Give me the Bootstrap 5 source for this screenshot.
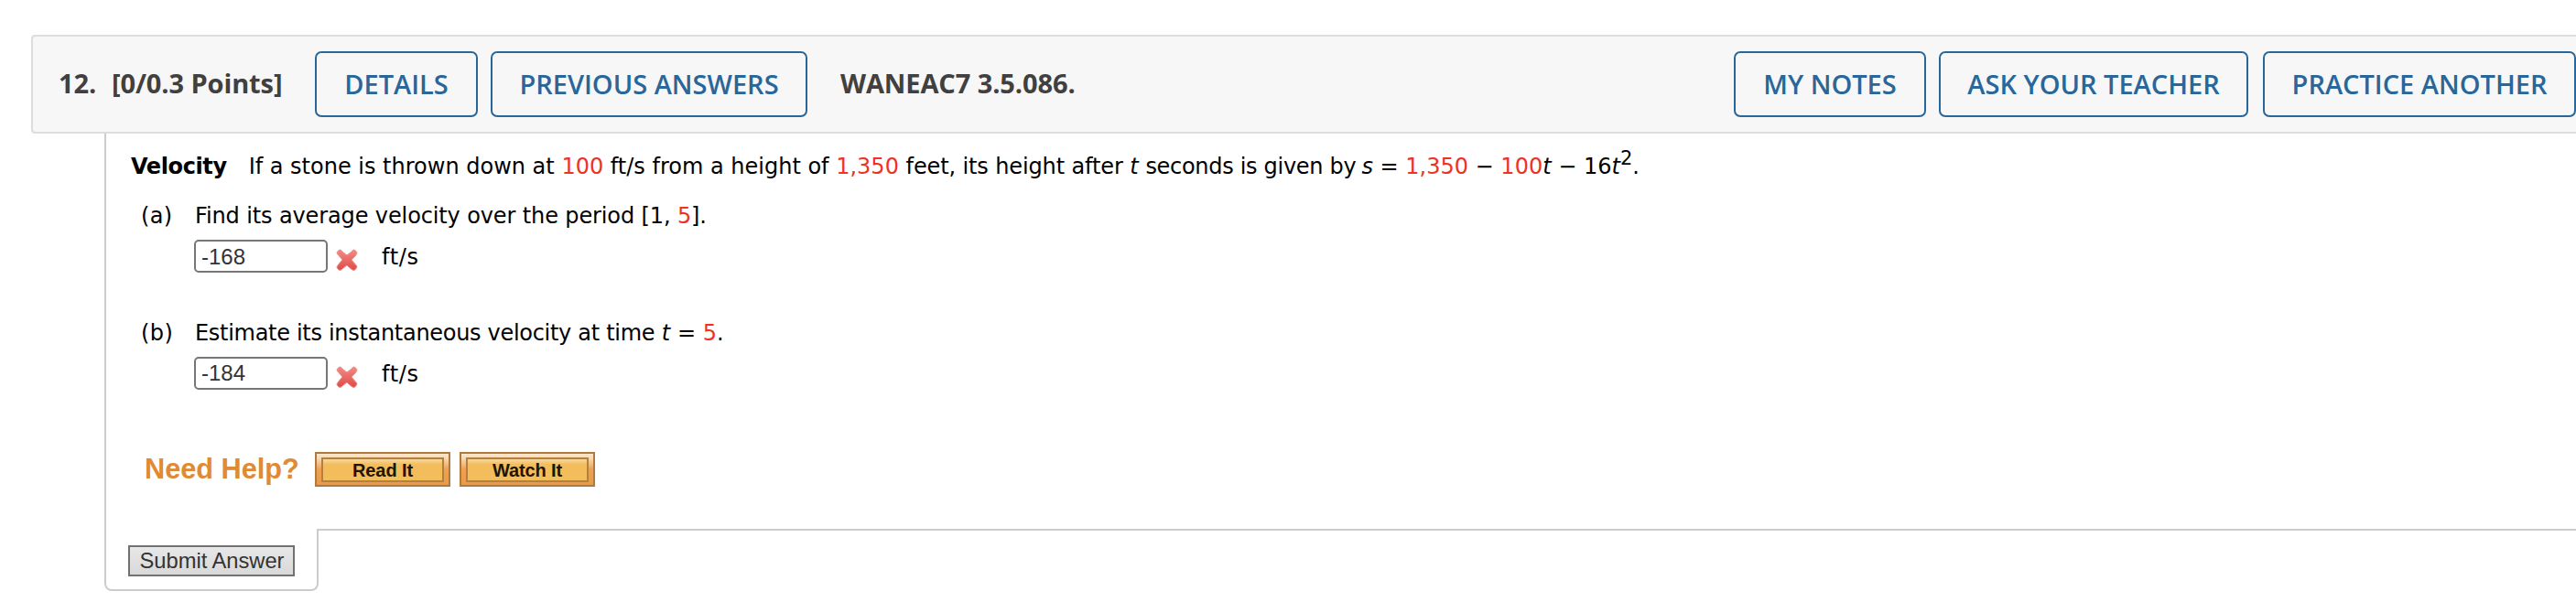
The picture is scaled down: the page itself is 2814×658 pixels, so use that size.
<!DOCTYPE html>
<html lang="en">

<head>
    <meta charset="UTF-8">
    <meta name="viewport" content="width=device-width, initial-scale=1.0">
    <title>Question 12</title>
    <link href="https://cdn.jsdelivr.net/npm/bootstrap@5.3.2/dist/css/bootstrap.min.css" rel="stylesheet">
    <style>
        body {
            background-color: #fff;
            color: #000;
            font-family: "DejaVu Sans", Verdana, sans-serif;
            font-size: 24px;
            line-height: 32px;
            white-space: nowrap;
            overflow: hidden;
        }

        .question-header {
            height: 108px;
            margin: 38px 0 0 34px;
            padding-left: 28px;
            background-color: #f7f7f7;
            border: 2px solid #ddd;
            border-right: 0;
            border-radius: 4px 0 0 4px;
            color: #404040;
            font-family: "Open Sans", sans-serif;
            font-size: 29px;
            font-weight: 700;
            letter-spacing: -.1px;
        }

        .question-number {
            width: 58px;
        }

        .question-points {
            width: 222px;
        }

        .header-label {
            padding-bottom: 2px;
        }

        .question-code {
            margin-left: 36px;
        }

        .question-header .btn {
            --bs-btn-color: #29669a;
            --bs-btn-border-color: #29669a;
            --bs-btn-hover-bg: #29669a;
            --bs-btn-hover-color: #fff;
            height: 72px;
            padding: 0 0 2px;
            border-width: 2px;
            border-radius: 7px;
            font-size: 29px;
            font-weight: 600;
            line-height: 1;
        }

        .btn-details { width: 178px; }
        .btn-previous { width: 346px; margin-left: 14px; }
        .btn-notes { width: 210px; }
        .btn-teacher { width: 338px; margin: 0 16px 0 14px; }
        .btn-practice { width: 342px; }

        .question-body {
            height: 432px;
            margin-left: 114px;
            padding: 20px 0 0 27px;
            border-left: 2px solid #ccc;
        }

        .topic {
            margin-right: 24px;
            letter-spacing: -.4px;
        }

        .rnd {
            color: #ee3224;
        }

        .tight {
            letter-spacing: -.12px;
        }

        .tighter {
            letter-spacing: -.3px;
        }

        .formula {
            margin-left: 6px;
            padding-bottom: 4px;
        }

        .formula sup {
            font-size: 21px;
            line-height: 0;
            top: -10px;
        }

        .part-list {
            padding: 18px 0 0 11px;
        }

        .part {
            height: 128px;
        }

        .part-label {
            width: 59px;
            letter-spacing: .4px;
        }

        .answer-row {
            height: 36px;
            margin: 10px 0 0 -1px;
        }

        .answer-input {
            width: 146px;
            height: 36px;
            padding: 2px 6px 0;
            border: 2px solid #767676;
            border-radius: 5px;
            color: #333;
            font: 24px "Liberation Sans", Arial, sans-serif;
        }

        .answer-input-b {
            padding: 0 6px 1px;
        }

        .wrong-mark {
            width: 24px;
            height: 24px;
            margin: 10px 26px 0 9px;
        }

        .units {
            margin-top: 3px;
            letter-spacing: .7px;
        }

        .help-row {
            height: 38px;
            margin-top: 18px;
            padding-left: 15px;
            font-family: "Liberation Sans", Arial, sans-serif;
            font-weight: 700;
        }

        .help-title {
            width: 186px;
            color: #e08a34;
            font-size: 30.7px;
        }

        .help-btn {
            width: 148px;
            height: 38px;
            margin-right: 10px;
            padding: 4px 5px;
            border: 2px solid #b07a3c;
            background: linear-gradient(#fbe6cd, #f8d9b4 15%, #eda152 50%, #ea9a48);
        }

        .help-btn span {
            display: block;
            width: 134px;
            height: 27px;
            border: 2px solid #b5803f;
            background: linear-gradient(#f8d9a0, #f3bd5b 25%, #f3bd5b);
            color: #1c1503;
            font-size: 20px;
            font-weight: 700;
            line-height: 24px;
            letter-spacing: -.1px;
            text-align: center;
        }

        .question-footer {
            margin-left: 114px;
        }

        .submit-tab {
            width: 234px;
            height: 68px;
            padding: 18px 0 0 24px;
            border: solid #ccc;
            border-width: 0 2px 2px;
            border-radius: 0 0 8px 8px;
        }

        .footer-line {
            border-top: 2px solid #ccc;
        }

        .submit-btn {
            width: 182px;
            height: 34px;
            padding: 1px 0 0 1px;
            border: 2px solid #717171;
            background: linear-gradient(#e8e8e8, #d9d9d9);
            color: #333;
            font: 23.7px/29px "Liberation Sans", Arial, sans-serif;
        }
    </style>
</head>

<body>
    <div class="question-header d-flex align-items-center">
        <div class="question-number header-label">12.</div>
        <div class="question-points header-label">[0/0.3 Points]</div>
        <button class="btn btn-details">DETAILS</button>
        <button class="btn btn-previous">PREVIOUS ANSWERS</button>
        <div class="question-code header-label">WANEAC7 3.5.086.</div>
        <div class="d-flex ms-auto">
            <button class="btn btn-notes">MY NOTES</button>
            <button class="btn btn-teacher">ASK YOUR TEACHER</button>
            <button class="btn btn-practice">PRACTICE ANOTHER</button>
        </div>
    </div>

    <div class="question-body">
        <div class="d-flex">
            <b class="topic">Velocity</b>
            <div>If a stone is thrown down at <span class="rnd">100</span> ft/s from a height of <span class="rnd">1,350</span> <span class="tight">feet, its height after</span> <i>t</i> <span class="tighter">seconds is given by</span></div>
            <div class="formula align-self-end"><i>s</i> = <span class="rnd">1,350</span> − <span class="rnd">100</span><i>t</i> − 16<i>t</i><sup>2</sup>.</div>
        </div>

        <div class="part-list">
            <div class="part d-flex">
                <div class="part-label">(a)</div>
                <div>
                    <div class="tight">Find its average velocity over the period [1, <span class="rnd">5</span>].</div>
                    <div class="answer-row d-flex align-items-start">
                        <input type="text" class="answer-input" value="-168">
                        <svg class="wrong-mark" viewBox="0 0 24 24">
                            <defs>
                                <linearGradient id="markFill" x1="0" y1="0" x2="0" y2="1">
                                    <stop offset="0" stop-color="#f28b86" />
                                    <stop offset="1" stop-color="#df4a46" />
                                </linearGradient>
                            </defs>
                            <path d="M5 1 Q8 4 12 7 Q16 4 19 1 Q21 .5 23 4 Q23.5 6 17 12 Q20 15.5 23 19 Q23.5 21 20 23.500 Q18 24 12 18 Q8 21 5 23.500 Q3 24 1 20.500 Q.5 19 7 12 Q4 8.500 1 5 Q.5 3 4 1 Z" fill="url(#markFill)" stroke="#f0928d" stroke-width="1" stroke-linejoin="round" />
                        </svg>
                        <span class="units">ft/s</span>
                    </div>
                </div>
            </div>

            <div class="part d-flex">
                <div class="part-label">(b)</div>
                <div>
                    <div><span class="tighter">Estimate its instantaneous velocity at time</span> <i>t</i> = <span class="rnd">5</span>.</div>
                    <div class="answer-row d-flex align-items-start">
                        <input type="text" class="answer-input answer-input-b" value="-184">
                        <svg class="wrong-mark" viewBox="0 0 24 24">
                            <path d="M5 1 Q8 4 12 7 Q16 4 19 1 Q21 .5 23 4 Q23.5 6 17 12 Q20 15.5 23 19 Q23.5 21 20 23.500 Q18 24 12 18 Q8 21 5 23.500 Q3 24 1 20.500 Q.5 19 7 12 Q4 8.500 1 5 Q.5 3 4 1 Z" fill="url(#markFill)" stroke="#f0928d" stroke-width="1" stroke-linejoin="round" />
                        </svg>
                        <span class="units">ft/s</span>
                    </div>
                </div>
            </div>
        </div>

        <div class="help-row d-flex align-items-center">
            <div class="help-title">Need Help?</div>
            <button class="help-btn"><span>Read It</span></button>
            <button class="help-btn"><span>Watch It</span></button>
        </div>
    </div>

    <div class="question-footer d-flex">
        <div class="submit-tab">
            <button class="submit-btn d-block">Submit Answer</button>
        </div>
        <div class="footer-line flex-grow-1"></div>
    </div>

    <script src="https://cdn.jsdelivr.net/npm/bootstrap@5.3.2/dist/js/bootstrap.bundle.min.js"></script>
</body>

</html>
